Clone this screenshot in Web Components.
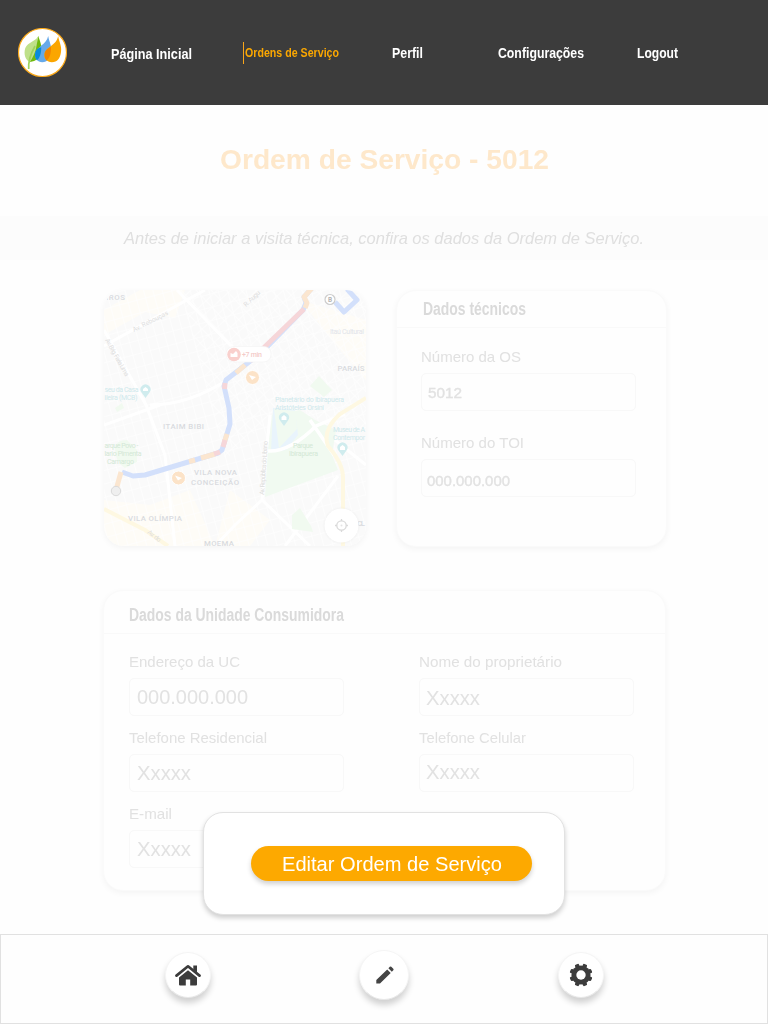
<!DOCTYPE html>
<html lang="pt-BR">
<head>
<meta charset="utf-8">
<title>Ordem de Serviço</title>
<style>
html,body{margin:0;padding:0}
body{font-family:"Liberation Sans",Arial,sans-serif;background:#fefefe}
</style>
</head>
<body>
<os-page></os-page>
<script>
const define = (name, html, setup) => customElements.define(name, class extends HTMLElement {
  constructor() {
    super();
    const t = document.createElement('template');
    t.innerHTML = html;
    this.attachShadow({mode: 'open'}).append(t.content.cloneNode(true));
  }
  connectedCallback() { if (setup) setup(this, this.shadowRoot); }
});

// A single line of text set to a given measure: size, w (width in px), lh (line height)
define('fit-text', `<style>
:host{display:block;white-space:nowrap;flex:none}
span{display:inline-block;transform-origin:0 0;vertical-align:top}
</style><span><slot></slot></span>`, (el, root) => {
  const size = el.getAttribute('size'), w = +el.getAttribute('w'), lh = el.getAttribute('lh') || 20;
  const s = root.querySelector('span');
  el.style.fontSize = size + 'px';
  el.style.lineHeight = lh + 'px';
  el.style.height = lh + 'px';
  el.style.width = w + 'px';
  s.style.transform = `scaleX(${w / s.getBoundingClientRect().width})`;
});

define('brand-logo', `<style>
:host{display:block;width:49px;height:49px;flex:none}svg{display:block}
</style>
<svg width="49" height="49" viewBox="0 0 49 49">
<circle cx="24.5" cy="24.5" r="24" fill="#fff" stroke="#fba919" stroke-width="1.2"/>
<path d="M20.400 8C21.500 12.500 23.800 16 23.300 22C22.500 29 18 33.700 12 33.900C11 29 11.500 24 14 19C15.500 15 19.300 12 20.400 8Z" fill="#6fb90e"/>
<path d="M20.400 8C18 13 10 14 7.300 20C5.300 26 7.500 32.500 12 33.900C15 29 17.800 24 18.500 18C18.900 14.500 20.300 11 20.400 8Z" fill="#bfe08a"/>
<path d="M10.700 41C10.200 34 12 27 17 18" fill="none" stroke="#9fd35c" stroke-width="1.700"/>
<path d="M30.200 8C31 14 34 17 32.900 24C31.800 30.500 29.500 34.200 24.300 34.200C19.500 34.200 16.500 30.500 17 26C18 18.500 28.500 17 30.200 8Z" fill="#66a9ea"/>
<path d="M23.200 19.300C23.300 26 21.700 30.500 18.800 32.300C16.500 29.500 16.600 24 18.600 21.800C19.600 20.300 21.300 19.800 23.200 19.300Z" fill="#078bdb"/>
<path d="M40.200 8C41 14 44 18 43 24C42.200 30.500 39.300 34.200 33.900 34.200C28.900 34.200 25.900 30.500 26.400 26.500C27.200 18.500 38 18.500 40.200 8Z" fill="#fba600"/>
<path d="M33 19.100C33.200 25 31.800 30.500 28.600 32.500C26 29.500 26 24.500 28.300 22C29.500 20.600 31.300 19.700 33 19.100Z" fill="#f28500"/>
</svg>`);

define('top-bar', `<style>
:host{display:flex;align-items:flex-start;height:105px;box-sizing:border-box;background:#3c3c3c;padding:28px 0 0 18px;color:#fff;font-weight:bold}
.p{margin:15.500px 0 0 44px}.o{margin:14px 0 0 51px;border-left:1px solid #f9a61a;padding-left:1px;height:22px;color:#fba700}
.o fit-text{padding-top:1px}
.r{margin:14.500px 0 0 53px}.c{margin:14.500px 0 0 75px}.l{margin:14.500px 0 0 53px}
</style>
<brand-logo></brand-logo>
<fit-text class="p" size="15" w="81">Página Inicial</fit-text>
<div class="o"><fit-text size="12.500" w="94">Ordens de Serviço</fit-text></div>
<fit-text class="r" size="15" w="31">Perfil</fit-text>
<fit-text class="c" size="15" w="86">Configurações</fit-text>
<fit-text class="l" size="15" w="41">Logout</fit-text>`);

define('route-map', `<style>
:host{display:block;width:262px;height:256px;border-radius:20px;overflow:hidden;box-shadow:0 2px 6px #0000000b;flex:none}
svg{display:block}text{font-family:Roboto,"Liberation Sans",sans-serif;fill:#dcdee1}
.area{font-weight:500;font-size:7.800px;fill:#d9dbdf}.poi{font-size:7px;fill:#cfe9ec}.road{font-size:6.500px;fill:#dedede}
.park{font-size:7px;fill:#d3e8d6}
</style>
<svg width="262" height="256" viewBox="104 290 262 256">
<defs>
<pattern id="a" width="11" height="9" patternUnits="userSpaceOnUse" patternTransform="rotate(-43)"><path d="M0 0H11M0 0V9" stroke="#fefefe" stroke-width="1.600"/></pattern>
<pattern id="b" width="9" height="13" patternUnits="userSpaceOnUse" patternTransform="rotate(-15)"><path d="M0 0H9M0 0V13" stroke="#fefefe" stroke-width="1.600"/></pattern>
</defs>
<rect x="104" y="290" width="262" height="256" fill="#fafafa"/>
<path d="M104 310L140 290H185L175 318L145 312L104 335ZM300 300L366 320V380L340 350ZM104 500L150 505L190 490L215 546H104ZM230 490L270 520L250 546H215Z" fill="#fefcf7"/>
<rect x="104" y="290" width="262" height="256" fill="url(#b)"/>
<path d="M180 290H366V430L280 410L225 460Z" fill="url(#a)"/>
<g fill="none" stroke="#fff" stroke-width="3">
<path d="M104 346L205 290M177 290L235 350M104 330L146 405L165 455L175 546M150 405Q190 405 230 378M270 415L262 500L310 546M262 500L235 525L215 546M338 476L285 546M310 420L366 465M104 425L160 405"/>
</g>
<path d="M272 415L300 410L315 420L336 430L332 455L338 470L265 497L268 450Z" fill="#f1faf1"/>
<path d="M273 408L295 410L298 435L286 450L271 452Z" fill="#e9f4fc"/>
<path d="M274 409L296 411L297 429L279 448Z" fill="#f1faf1"/>
<path d="M310 386L319 376L332 390L324 397ZM115 448Q116 440 127 440L137 450V462L125 468Q115 462 115 448ZM292 515L300 508L311 526L313 532L292 529ZM115 408L122 403L124 408L117 412Z" fill="#f1faf0"/>
<path d="M310 420L334 455M268 451Q290 452 316 426L345 414" fill="none" stroke="#fff" stroke-width="3.500"/>
<g fill="none" stroke="#fef8e2" stroke-width="4"><path d="M366 398L340 414Q322 430 328 446Q344 464 343 480V546M104 509L145 530L168 546"/></g>
<text class="area" x="106" y="299.500" textLength="19">IROS</text>
<text class="road" transform="translate(134 332) rotate(-27)">Av. Rebouças</text>
<text class="road" transform="translate(105 340) rotate(61)" textLength="42">Av. Brig. Faria Lima</text>
<text class="road" transform="translate(246 307) rotate(-43)" textLength="20">R. Augu</text>
<text class="road" transform="translate(147 533) rotate(38)" textLength="15">Av. do</text>
<text class="road" transform="translate(129 0)"></text>
<text class="road" transform="translate(129 495)"></text>
<text class="road" transform="translate(264 495) rotate(-86)" textLength="54">Av. República do Líbano</text>
<text class="road" x="330" y="334" textLength="34" style="font-size:7px;fill:#e2e4ea">Itaú Cultural</text>
<text class="area" x="337.500" y="371" textLength="27">PARAÍS</text>
<text class="poi" x="104.500" y="392" textLength="34">seu da Casa</text><text class="poi" x="104.500" y="399.500" textLength="33">ileira (MCB)</text>
<text class="poi" x="275" y="401.500" textLength="69">Planetário do Ibirapuera</text><text class="poi" x="275" y="409.500" textLength="49">Aristóteles Orsini</text>
<text class="poi" x="333" y="431.500" textLength="32">Museu de A</text><text class="poi" x="333" y="439.500" textLength="32">Contempor</text>
<text class="park" x="104.500" y="448" textLength="34">arque Povo -</text><text class="park" x="104.500" y="456" textLength="37">lario Pimenta</text><text class="park" x="107" y="464" textLength="27">Camargo</text>
<text class="park" x="293" y="448" textLength="20">Parque</text><text class="park" x="289" y="456" textLength="29">Ibirapuera</text>
<text class="area" x="163" y="429" textLength="41">ITAIM BIBI</text>
<text class="area" x="194" y="474.500" textLength="43">VILA NOVA</text><text class="area" x="191" y="484.500" textLength="48">CONCEIÇÃO</text>
<text class="area" x="128" y="520.500" textLength="54">VILA OLÍMPIA</text><text class="area" x="204" y="545.500" textLength="30">MOEMA</text><text class="area" x="357" y="526" textLength="8">CL</text>
<g fill="none" stroke-width="5" stroke-linejoin="round">
<path stroke="#d3e0fb" d="M122 472L133 476L145 475L218 453L222 450L230 424L229 408L224 386L226 380L262 352L303 310L306 303L304 297L312 288M335 302L344 312L357 300L347 289"/>
<g stroke="#fbe6d0"><path d="M116 490L121 472M189 461.700L195 460M201 458L215 454M224 443L227 434M236 373L245 365"/><path d="M305 308L307 303L304 297L312 288"/></g>
<path stroke="#f6d6d9" d="M214 454L220 452M223 447L225 440M224.500 389L225 383M250 361L304 309"/>
</g>
<circle cx="116" cy="491" r="4.700" fill="#efefef" stroke="#dadada"/>
<circle cx="330" cy="299.500" r="5" fill="#fff" stroke="#ccc" stroke-width="1.200"/><text x="330" y="302" text-anchor="middle" style="font-size:6.500px;font-weight:bold;fill:#b5b5b5">B</text>
<path d="M234 346.500H263Q271 346.500 271 354T263 362H234Q226 361 226 354T234 346.500Z" fill="#fff" stroke="#f4f4f4" stroke-width=".7"/>
<circle cx="234" cy="354.500" r="6.800" fill="#f9d0cd"/><path d="M230.500 357V353L233 354L236 351L237.500 353V357Z" fill="#fff"/>
<text x="242" y="357" textLength="20" style="font-size:7px;fill:#f4cbc8;font-weight:500">+7 min</text>
<g fill="#fce3c8" stroke="#fff"><circle cx="252.500" cy="377.500" r="7"/><circle cx="178.500" cy="478" r="7"/></g>
<path d="M249 375L256 377L252 380ZM175 475.500L182 478L178 480.500Z" fill="#fff"/>
<g fill="#d0ecee"><path id="pin" d="M145.500 398L141.500 392.500A5 5 0 1 1 149.500 392.500Z"/><use href="#pin" x="138.500" y="28"/><use href="#pin" x="197" y="58"/></g>
<g fill="#fff"><path d="M143 389L145.500 387L148 389V391H143ZM281.500 417L284 415L286.500 417V420H281.500ZM340 447L342.500 445L345 447V450H340Z"/></g>
<circle cx="341.500" cy="525.500" r="17" fill="#fff" style="filter:drop-shadow(0 0 1px #0001)"/>
<g fill="none" stroke="#dadada" stroke-width="1.300"><circle cx="341.500" cy="525.500" r="4.700"/><path d="M341.500 519V521M341.500 530V532M335 525.500H337M346 525.500H348"/></g><circle cx="341.500" cy="525.500" r="1" fill="#e4e4e4"/>
</svg>`);

define('data-card', `<style>
:host{display:block;box-sizing:border-box;background:#fefefe;border:1px solid #fafafa;border-radius:20px;box-shadow:0 2px 6px #0000000b;flex:none}
header{border-bottom:1px solid #f9f9f9;box-sizing:border-box;height:var(--head);padding:var(--hp);font-weight:bold;color:#dadada}
</style><header><slot name="title"></slot></header><slot></slot>`);

define('data-field', `<style>
:host{display:block;color:#e1e1e1;width:215px}
.box{box-sizing:border-box;height:38px;border:1px solid #f8f8f8;border-radius:5px;margin-top:6px;padding:var(--vp,8px) 0 0 var(--vl,7px);color:#e2e2e2}
</style><slot name="label"></slot><div class="box"><slot></slot></div>`);

define('edit-dialog', `<style>
:host{display:flex;justify-content:center;align-items:flex-start;box-sizing:border-box;padding-top:33px;width:362px;height:103px;border:1px solid #e2e2e2;border-radius:20px;background:#fff;box-shadow:0 3px 5px #00000030}
button{all:unset;display:flex;align-items:flex-start;box-sizing:border-box;width:281px;height:35px;margin-left:14px;border-radius:18px;background:#fda900;color:#fff;box-shadow:0 3px 5px #00000030;padding:6px 0 0 31px}
</style><button><fit-text size="19.500" w="220" lh="24">Editar Ordem de Serviço</fit-text></button>`);

define('round-button', `<style>
:host{display:flex;align-items:center;justify-content:center;flex:none;background:#fff;border-radius:50%;box-sizing:border-box;border:1px solid #f5f5f5;border-bottom-color:#e8e8e8;box-shadow:0 5px 6px #0000002e}
</style><slot></slot>`);

define('bottom-bar', `<style>
:host{display:flex;align-items:flex-start;height:90px;box-sizing:border-box;border:1px solid #e1e1e1;background:#fefefe}
round-button{width:46px;height:46px;margin-top:17px}.h{margin-left:164px}.e{width:50px;height:50px;margin:15px 0 0 148px}.g{margin-left:149px}
svg{display:block}
</style>
<round-button class="h"><svg width="26" height="23" viewBox="0 0 26 23"><path d="M4 13.500L13 6.300L22 13.500V20.500Q22 21.500 21 21.500H15.200V15.500H10.800V21.500H5Q4 21.500 4 20.500Z" fill="#3c3c3c"/><path d="M1.500 11.600L13 2.300L24.500 11.600" fill="none" stroke="#3c3c3c" stroke-width="2.700" stroke-linecap="round" stroke-linejoin="round"/><path d="M18.300 1.500H22V8.500L18.300 5.500Z" fill="#3c3c3c"/></svg></round-button>
<round-button class="e"><svg width="18" height="18" viewBox="0 0 18 18" style="margin-left:2px"><path d="M0.300 14L11.200 3.400L14.700 6.900L4 17.500H.3ZM12.400 2.200L13.800.8Q14.500.1 15.300.8L17.300 2.700Q18 3.500 17.300 4.200L15.800 5.700Z" fill="#444"/></svg></round-button>
<round-button class="g"><svg width="24" height="24" viewBox="-12 -12 24 24"><g fill="#3c3c3c"><g id="t"><rect x="-2.200" y="-11.500" width="4.400" height="23" rx="1.200" transform="rotate(22.500)"/><rect x="-2.200" y="-11.500" width="4.400" height="23" rx="1.200" transform="rotate(67.500)"/></g><use href="#t" transform="rotate(90)"/><circle r="9.600"/></g><circle r="4.700" fill="#fff"/></svg></round-button>`);

define('os-page', `<style>
:host{display:flex;flex-direction:column;position:relative;width:768px;height:1024px;overflow:hidden;background:#fefefe}
top-bar{flex:none}
h1{margin:0;height:111px;box-sizing:border-box;padding:39px 0 0 220px;color:#fee8cb;flex:none}
.band{height:44px;box-sizing:border-box;background:#fcfcfc;padding:13px 0 0 124px;font-style:italic;color:#dfdfdf;flex:none}
.row{display:flex;gap:30px;padding:30px 0 0 104px;flex:none}
.tech{width:271px;height:257px;--head:37px;--hp:7px 0 0 26px}
.stack{display:flex;flex-direction:column;gap:22px;padding:19px 0 0 24px}
.unit{width:563px;height:301px;margin:43px 0 0 103px;--head:43px;--hp:14px 0 0 25px}
.grid{display:grid;grid-template-columns:215px 215px;column-gap:75px;row-gap:12px;padding:18px 0 0 25px}
bottom-bar{flex:none;margin-top:auto}
edit-dialog{position:absolute;left:203px;top:812px}
</style>
<top-bar></top-bar>
<h1><fit-text size="28" w="329" lh="32">Ordem de Serviço - 5012</fit-text></h1>
<div class="band"><fit-text size="17" w="520">Antes de iniciar a visita técnica, confira os dados da Ordem de Serviço.</fit-text></div>
<div class="row"><route-map></route-map>
<data-card class="tech"><fit-text slot="title" size="18" w="103" lh="22">Dados técnicos</fit-text>
<div class="stack">
<data-field style="--vp:9px;--vl:6px"><fit-text slot="label" size="15" w="100">Número da OS</fit-text><fit-text size="15" w="34" style="-webkit-text-stroke:.4px">5012</fit-text></data-field>
<data-field style="--vp:11px;--vl:5px"><fit-text slot="label" size="15" w="103">Número do TOI</fit-text><fit-text size="15" w="83" style="-webkit-text-stroke:.4px">000.000.000</fit-text></data-field>
</div></data-card></div>
<data-card class="unit"><fit-text slot="title" size="18" w="215">Dados da Unidade Consumidora</fit-text>
<div class="grid">
<data-field><fit-text slot="label" size="15" w="111">Endereço da UC</fit-text><fit-text size="20" w="111">000.000.000</fit-text></data-field>
<data-field style="--vp:9px;--vl:6px"><fit-text slot="label" size="15" w="143">Nome do proprietário</fit-text><fit-text size="20" w="54">Xxxxx</fit-text></data-field>
<data-field style="--vp:8px"><fit-text slot="label" size="15" w="138">Telefone Residencial</fit-text><fit-text size="20" w="54">Xxxxx</fit-text></data-field>
<data-field style="--vp:7px;--vl:6px"><fit-text slot="label" size="15" w="107">Telefone Celular</fit-text><fit-text size="20" w="54">Xxxxx</fit-text></data-field>
<data-field style="--vp:8px"><fit-text slot="label" size="15" w="43">E-mail</fit-text><fit-text size="20" w="54">Xxxxx</fit-text></data-field>
</div></data-card>
<edit-dialog></edit-dialog>
<bottom-bar></bottom-bar>`);
</script>
</body>
</html>
